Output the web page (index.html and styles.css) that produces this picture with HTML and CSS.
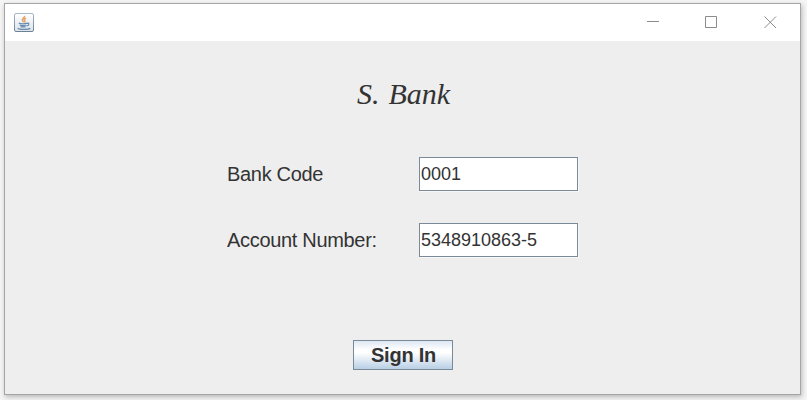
FILE: index.html
```html
<!DOCTYPE html>
<html lang="en">
<head>
<meta charset="utf-8">
<title>S. Bank</title>
<link rel="stylesheet" href="styles.css">
</head>
<body>
<main class="window">
  <header class="titlebar">
    <svg class="app-icon" width="20" height="20" viewBox="0 0 20 20" fill="none">
      <defs>
        <linearGradient id="tile" x1="0" y1="0" x2="0" y2="1"><stop offset="0" stop-color="#fff"/><stop offset="1" stop-color="#dce4ec"/></linearGradient>
        <linearGradient id="edge" x1="0" y1="0" x2="0" y2="1"><stop offset="0" stop-color="#a9b9c9"/><stop offset="1" stop-color="#6f8093"/></linearGradient>
      </defs>
      <rect x=".5" y=".5" width="19" height="18" rx="1.5" fill="url(#tile)" stroke="url(#edge)"/>
      <path d="M10.600 2.800c.5 2.100-3.300 2.800-2.100 4.900l1.100 1.500M12.100 5.300c-2.200.8-2.200 1.700-1.400 2.500.5.6.2 1.200-.3 1.500" stroke="#e5a468" stroke-width="1.500"/>
      <path d="M4.800 10.200c2 .8 6.400.6 8.400 0M5.600 12c1.800.7 5.100.6 6.800 0M6.500 13.600c1.500.5 3.600.4 5.200 0M13 10.100c2.800-.2 2.300 2.300-.3 2.800M3.700 15.300c1.500 1.500 10.500 1.400 12.600.1" stroke="#6a8cae" stroke-width="1.300"/>
    </svg>
    <div class="controls">
      <svg width="13" height="13" viewBox="0 0 13 13"><path d="M1 5.500h12"/></svg>
      <svg width="13" height="13" viewBox="0 0 13 13"><path d="M.5.5h11v11H.5z"/></svg>
      <svg width="13" height="13" viewBox="0 0 13 13"><path d="M.5.5l11.500 11.500M12 .5L.5 12"/></svg>
    </div>
  </header>
  <h1 class="title">S. Bank</h1>
  <form class="form">
    <label class="label" for="code">Bank Code</label>
    <input class="field" id="code" value="0001">
    <label class="label" for="account">Account Number:</label>
    <input class="field" id="account" value="5348910863-5">
    <button class="submit" type="button">Sign In</button>
  </form>
</main>
</body>
</html>
```
FILE: styles.css
```css
* { box-sizing: border-box; }
body {
  margin: 0;
  height: 400px;
  padding: 3px 6px 5px 4px;
  overflow: hidden;
  background: #f5f5f5;
  font-family: "Liberation Sans", Arial, sans-serif;
  color: #333;
}
.window {
  height: 392px;
  border: 1px solid #a5a5a5;
  background: #eee;
  box-shadow: 1px 2px 5px rgba(0, 0, 0, .25);
}
.titlebar {
  height: 37px;
  padding: 0 23px 0 9px;
  display: flex;
  align-items: center;
  justify-content: space-between;
  background: #fff;
}
.app-icon { margin-top: 1px; }
.controls { display: flex; gap: 46px; }
.controls svg { stroke: #8c8c8c; fill: none; }
.title {
  margin: 36px 0 0;
  padding-left: 2px;
  font: italic 400 30px/34px "Liberation Serif", "Times New Roman", serif;
  word-spacing: 1.5px;
  text-align: center;
}
.form {
  margin: 46px 0 0 222px;
  display: grid;
  grid-template-columns: 192px 159px;
  grid-template-rows: 34px 34px 30px;
  row-gap: 32px;
  align-items: center;
}
.label {
  font-size: 20px;
  line-height: 34px;
  letter-spacing: -.32px;
}
.field {
  width: 159px;
  height: 34px;
  margin: 0;
  padding: 0 1px;
  border: 1px solid #7a8a99;
  border-radius: 0;
  outline: 0;
  background: #fff;
  box-shadow: 1px 1px 0 #f8f8f8;
  color: #333;
  font: 18px/32px "Liberation Sans", Arial, sans-serif;
}
.submit {
  grid-column: 1 / -1;
  width: 100px;
  height: 30px;
  margin: 51px 0 0 126px;
  align-self: start;
  padding: 0 0 0 1px;
  border: 1px solid #7a8a99;
  border-radius: 0;
  background: linear-gradient(#dde8f3 0%, #fff 32%, #fff 42%, #b8cfe5 100%);
  color: #333;
  font: bold 20px/28px "Liberation Sans", Arial, sans-serif;
  letter-spacing: -.25px;
}
```
